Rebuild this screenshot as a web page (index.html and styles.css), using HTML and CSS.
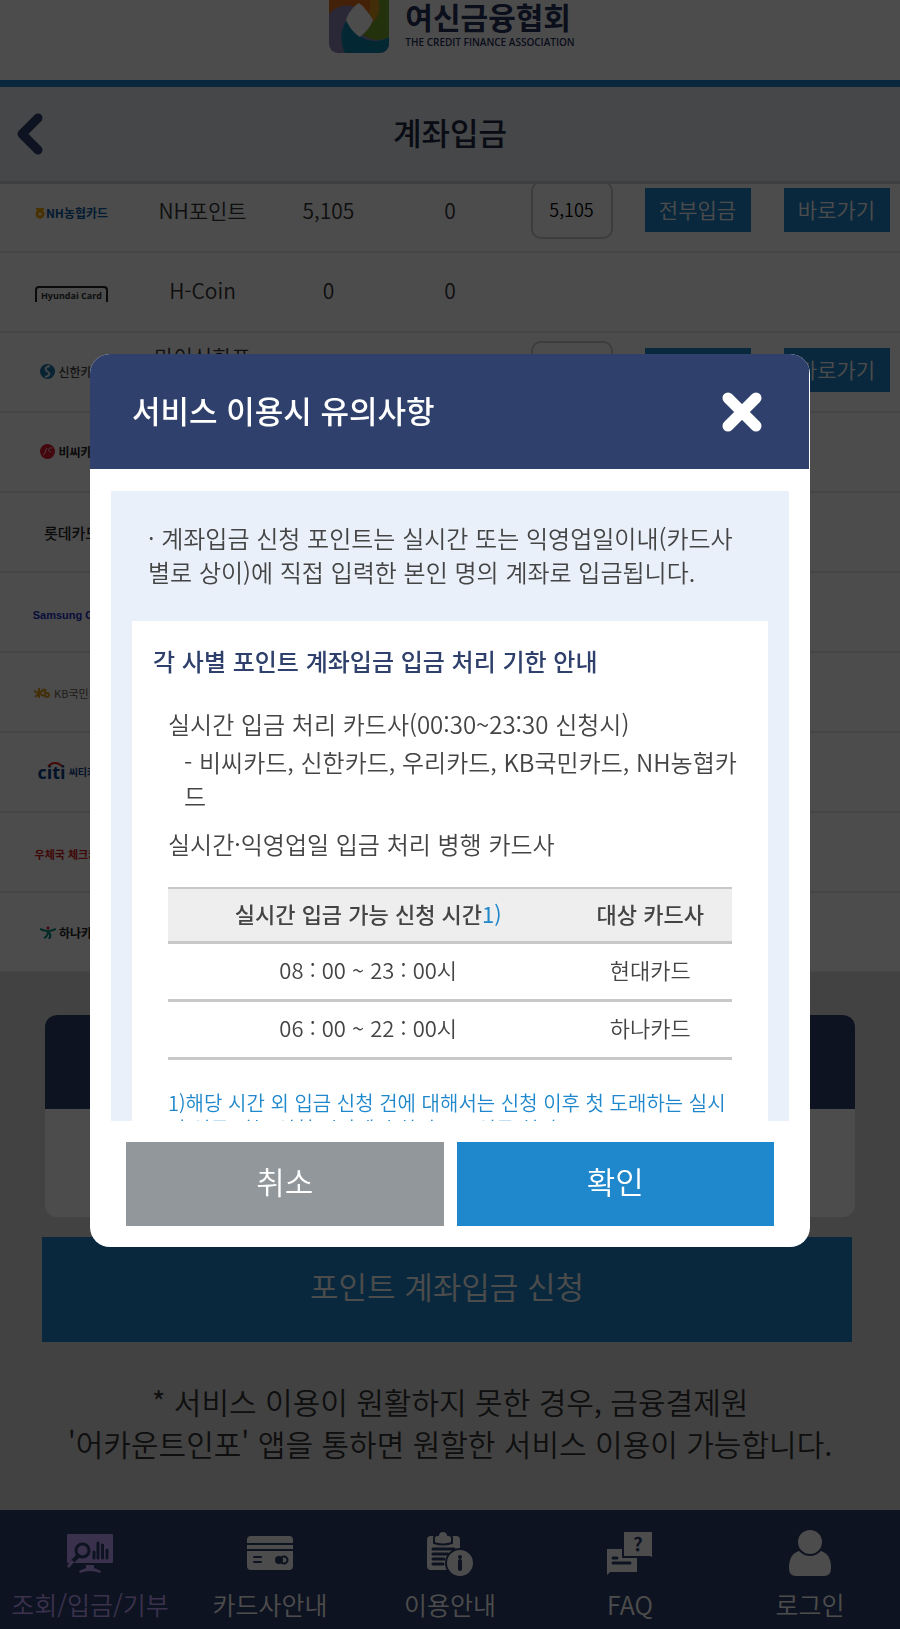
FILE: index.html
```html
<!DOCTYPE html>
<html lang="ko">
  <head>
    <meta charset="UTF-8" />
    <meta name="viewport" content="width=device-width, initial-scale=1.0" />
    <title>계좌입금</title>
    <link rel="stylesheet" href="styles.css">
  </head>

  <body>
    <header class="brand">
      <svg class="brand-mark" width="60" height="61" viewBox="0 0 60 61">
        <rect width="60" height="61" rx="9" fill="#8d86b8" />
        <path d="M0 22V9a9 9 0 0 1 9-9h34c8 8 8 18 1 33L30 17C20 11 8 13 0 22z" fill="#e0701c" />
        <path d="M36 0h15a9 9 0 0 1 9 9v36c-10 5-20 3-27-3l11-13c7-10 3-20-8-29z" fill="#77a52a" />
        <path d="M36 0h8c9 10 8 20 1 30l-6-6c4-9 3-17-3-24z" fill="#d99a1b" />
        <path d="M16 61C10 48 12 36 18 28l12 15c8 7 20 8 30 2v7a9 9 0 0 1-9 9z" fill="#0b87ae" />
        <path d="M30 11c5 4 10 10 14 17-2 6-7 12-13 17-6-4-11-10-14-17 2-7 7-13 13-17z" fill="#fff" />
      </svg>
      <div class="brand-text">
        <strong>여신금융협회</strong>
        <span>THE CREDIT FINANCE ASSOCIATION</span>
      </div>
    </header>

    <div class="title-bar">
      <button type="button" class="back" aria-label="뒤로">
        <svg width="28" height="42" viewBox="0 0 28 42"><path d="M22 5L6 21l16 16" /></svg>
      </button>
      <h1>계좌입금</h1>
    </div>

    <main>
      <table class="points">
        <colgroup>
          <col class="c-logo" /><col class="c-name" /><col class="c-own" /><col class="c-min" />
          <col class="c-input" /><col class="c-all" /><col class="c-go" />
        </colgroup>
        <tbody>
          <tr>
            <td><span class="logo nh"><svg width="10" height="12" viewBox="0 0 10 12"><path d="M1 1h8v2H1z" fill="#f5a800" /><circle cx="5" cy="7" r="3" fill="none" stroke="#f5a800" stroke-width="3" /></svg>NH농협카드</span></td>
            <td>NH포인트</td>
            <td>5,105</td>
            <td>0</td>
            <td><input type="text" value="5,105" aria-label="NH포인트 입금 포인트" /></td>
            <td><button type="button" class="small-btn">전부입금</button></td>
            <td><button type="button" class="small-btn">바로가기</button></td>
          </tr>
          <tr>
            <td><span class="logo hyundai">Hyundai Card</span></td>
            <td>H-Coin</td>
            <td>0</td>
            <td>0</td>
            <td></td>
            <td></td>
            <td></td>
          </tr>
          <tr>
            <td><span class="logo shinhan"><svg width="15" height="15" viewBox="0 0 15 15"><circle cx="7.5" cy="7.5" r="7.5" fill="#1b75a8" /><path d="M10 2C4 3 5 6 8 8s1 4-3 5" fill="none" stroke="#dfeef5" stroke-width="2" /></svg>신한카드</span></td>
            <td>마이신한포<br />인트</td>
            <td>0</td>
            <td>0</td>
            <td><input type="text" value="0" aria-label="마이신한포인트 입금 포인트" /></td>
            <td><button type="button" class="small-btn">전부입금</button></td>
            <td><button type="button" class="small-btn">바로가기</button></td>
          </tr>
          <tr>
            <td><span class="logo bc"><svg width="15" height="15" viewBox="0 0 15 15"><circle cx="7.5" cy="7.5" r="7.5" fill="#e0182d" /><path d="M3 11c3-1 2-5 4-7M12 4c-4-1-5 4-1 4" fill="none" stroke="#f7d5d8" /></svg>비씨카드</span></td>
            <td colspan="6"></td>
          </tr>
          <tr>
            <td><span class="logo lotte">롯데카드</span></td>
            <td colspan="6"></td>
          </tr>
          <tr>
            <td><span class="logo samsung">Samsung Card</span></td>
            <td colspan="6"></td>
          </tr>
          <tr>
            <td><span class="logo kb"><svg width="17" height="12" viewBox="0 0 17 12"><path d="M5 1v10M0 4l10 5M10 2L1 10M10 6l2-4M11 8a2 2 0 1 0 4 0 2 2 0 0 0-4 0z" fill="none" stroke="#e0a020" stroke-width="2" /></svg>KB국민카드</span></td>
            <td colspan="6"></td>
          </tr>
          <tr>
            <td><span class="logo citi"><span class="citi-word">citi<svg width="16" height="5" viewBox="0 0 16 5"><path d="M1 4Q8-2 15 4" fill="none" stroke="#d9261c" stroke-width="2" /></svg></span>씨티카드</span></td>
            <td colspan="6"></td>
          </tr>
          <tr>
            <td><span class="logo post">우체국 체크카드</span></td>
            <td colspan="6"></td>
          </tr>
          <tr>
            <td><span class="logo hana"><svg width="16" height="13" viewBox="0 0 16 13"><circle cx="8" cy="2" r="1.5" fill="#e0182d" /><path d="M0 3c6 3 10 3 16 0M8 5c0 4-1 6-4 7M8 6c3 2 3 4 1 7" fill="none" stroke="#008c80" stroke-width="2" /></svg>하나카드</span></td>
            <td colspan="6"></td>
          </tr>
        </tbody>
      </table>

      <section class="total-card">
        <div class="total-head"></div>
        <div class="total-body"></div>
      </section>

      <button type="button" class="apply">포인트 계좌입금 신청</button>
      <p class="notice">* 서비스 이용이 원활하지 못한 경우, 금융결제원<br />'어카운트인포' 앱을 통하면 원할한 서비스 이용이 가능합니다.</p>
    </main>

    <nav class="tabs">
      <a href="#" class="active">
        <svg width="48" height="48" viewBox="0 0 48 48">
          <rect x="1" y="4" width="46" height="29" rx="1" fill="currentColor" />
          <path d="M20 35h8v3h-8zM13 41q11-7 22 0l-1 2q-10-4-20 0z" fill="currentColor" />
          <g class="cut"><path d="M12 26L7 31" stroke-width="4" /><circle cx="16.5" cy="20.5" r="6.5" /><path d="M28 22v6M32 13v15M36.500 15v13M41 20v8" /></g>
          <path d="M7 31l-5 6" stroke="currentColor" stroke-width="3" />
        </svg>
        조회/입금/기부
      </a>
      <a href="#">
        <svg width="48" height="48" viewBox="0 0 48 48">
          <rect x="1" y="6" width="46" height="34" rx="4" fill="currentColor" />
          <g class="cut thin"><path d="M1 14h46M1 20h46M8 27h7M8 32h7" /><circle cx="38" cy="30" r="3.500" /></g>
          <circle class="hole" cx="33" cy="30" r="4" />
        </svg>
        카드사안내
      </a>
      <a href="#">
        <svg width="48" height="48" viewBox="0 0 48 48">
          <rect x="1" y="6" width="33" height="34" rx="4" fill="currentColor" />
          <path class="clip" d="M8 13V8q0-3 4-3 1-4 5-4t5 4q4 0 4 3v5q-9 3-18 0z" />
          <g class="cut"><path d="M7 19h21M7 24h15M7 29h11M7 34h10" /></g>
          <circle class="info" cx="34" cy="33" r="14" />
          <circle class="hole" cx="34" cy="27" r="2" />
          <g class="cut"><path d="M34 31v8" stroke-width="4" /></g>
        </svg>
        이용안내
      </a>
      <a href="#">
        <svg width="48" height="48" viewBox="0 0 48 48">
          <path d="M1 19h30v23H4l-3 3z" fill="currentColor" />
          <g class="cut"><path d="M7 28h4M7 33h17" /></g>
          <path class="bubble" d="M17 1h30v28l-3-2H17z" />
          <text class="mark" x="32" y="21" text-anchor="middle">?</text>
        </svg>
        FAQ
      </a>
      <a href="#">
        <svg width="48" height="48" viewBox="0 0 48 48">
          <path d="M13 21h22q10 3 10 17 0 8-7 8H10q-7 0-7-8 0-14 10-17z" fill="currentColor" />
          <circle class="head" cx="24" cy="12" r="13" />
        </svg>
        로그인
      </a>
    </nav>

    <div class="overlay">
      <div class="modal" role="dialog" aria-modal="true" aria-labelledby="modal-title">
        <div class="modal-head">
          <h2 id="modal-title">서비스 이용시 유의사항</h2>
          <button type="button" class="close" aria-label="닫기">
            <svg width="42" height="42" viewBox="0 0 42 42"><path d="M7 7l28 28M35 7L7 35" /></svg>
          </button>
        </div>

        <div class="modal-scroll">
          <p class="lead">· 계좌입금 신청 포인트는 실시간 또는 익영업일이내(카드사<br />별로 상이)에 직접 입력한 본인 명의 계좌로 입금됩니다.</p>

          <div class="guide">
            <h3>각 사별 포인트 계좌입금 입금 처리 기한 안내</h3>
            <div class="guide-body">
              <p>실시간 입금 처리 카드사(00:30~23:30 신청시)</p>
              <p class="cards">- 비씨카드, 신한카드, 우리카드, KB국민카드, NH농협카드</p>
              <p>실시간·익영업일 입금 처리 병행 카드사</p>

              <table class="hours">
                <thead>
                  <tr>
                    <th>실시간 입금 가능 신청 시간<span class="ref">1)</span></th>
                    <th>대상 카드사</th>
                  </tr>
                </thead>
                <tbody>
                  <tr>
                    <td>08 : 00 ~ 23 : 00시</td>
                    <td>현대카드</td>
                  </tr>
                  <tr>
                    <td>06 : 00 ~ 22 : 00시</td>
                    <td>하나카드</td>
                  </tr>
                </tbody>
              </table>

              <p class="footnote">1)해당 시간 외 입금 신청 건에 대해서는 신청 이후 첫 도래하는 실시간 입금 가능 신청 시간에 순차적으로 입금 처리</p>
            </div>
          </div>
        </div>

        <div class="modal-actions">
          <button type="button" class="cancel">취소</button>
          <button type="button" class="confirm">확인</button>
        </div>
      </div>
    </div>
  </body>
</html>
```
FILE: styles.css
```css
* {
  box-sizing: border-box;
}

body {
  margin: 0;
  min-height: 100vh;
  display: flex;
  flex-direction: column;
  background: #dcdcdc;
  color: #333;
  font-family: "Noto Sans CJK KR", sans-serif;
  font-weight: 350;
}

h1,
h2,
h3,
p {
  margin: 0;
}

button,
input {
  font-family: inherit;
  font-weight: inherit;
}

button {
  border: 0;
  padding: 0;
}

/* top */
.brand {
  height: 80px;
  padding-left: 4px;
  background: #fff;
  display: flex;
  justify-content: center;
  align-items: flex-start;
  gap: 16px;
  overflow: hidden;
}

.brand-mark {
  margin-top: -8px;
}

.brand-text {
  display: flex;
  flex-direction: column;
  color: #26305c;
  line-height: 32px;
}

.brand-text strong {
  font-size: 30px;
  font-weight: 700;
}

.brand-text span {
  font-family: "Open Sans", sans-serif;
  font-size: 10px;
  font-weight: 600;
  line-height: 20px;
}

.title-bar {
  position: relative;
  z-index: 1;
  height: 104px;
  border-top: 7px solid #1f87cb;
  border-bottom: 3px solid #cfd4d8;
  background: #e6edf2;
  display: grid;
  grid-template-columns: 60px 1fr 60px;
  align-items: center;
}

.title-bar h1 {
  padding-bottom: 4px;
  text-align: center;
  font-size: 31px;
  font-weight: 500;
  line-height: 40px;
  color: #1f2a44;
}

.back {
  background: none;
  display: flex;
  justify-content: center;
}

.back path,
.close path {
  fill: none;
  stroke: #2e406b;
  stroke-width: 9;
  stroke-linecap: round;
  stroke-linejoin: round;
}

/* point list, scrolled slightly under the title bar */
.points {
  width: 100%;
  margin-top: -12px;
  table-layout: fixed;
  border-collapse: collapse;
  background: #fff;
  font-size: 21px;
  line-height: 28px;
  text-align: center;
}

.c-logo { width: 15%; }
.c-name { width: 15%; }
.c-own { width: 13%; }
.c-min { width: 14%; }
.c-input { width: 13%; }
.c-all { width: 15%; }
.c-go { width: 15%; }

.points td {
  height: 80px;
  padding: 0 0 4px;
  border-bottom: 2px solid #e6e6e6;
}

.points td:first-child,
.points td:last-child {
  padding-left: 8px;
}

.points input {
  width: 82px;
  height: 58px;
  padding: 0 0 2px;
  border: 2px solid #ccc;
  border-radius: 10px;
  background: #fff;
  text-align: center;
  font-size: 18px;
  color: #000;
}

.small-btn {
  width: 106px;
  height: 44px;
  padding-bottom: 2px;
  background: #1f87cb;
  color: #fff;
  font-size: 21px;
}

.logo {
  display: inline-flex;
  align-items: center;
  gap: 3px;
  font-size: 12px;
  line-height: 16px;
  font-weight: 700;
  white-space: nowrap;
}

.nh { color: #0b5aa6; gap: 1px; }

.hyundai {
  padding: 2px 4px 0;
  border: 2px solid #222;
  border-bottom: 0;
  border-radius: 4px 4px 0 0;
  font-family: "Open Sans", sans-serif;
  font-size: 9px;
  line-height: 12px;
}

.shinhan { font-weight: 500; color: #444; font-size: 12px; }
.bc { color: #222; }
.lotte { color: #222; font-size: 15px; font-weight: 500; }
.samsung { color: #1c2ec0; font-family: "Liberation Sans", sans-serif; font-size: 11px; }
.kb { color: #6b6259; font-weight: 400; font-size: 11px; }
.citi { color: #0b3f86; font-size: 10px; }
.post { color: #d3201c; font-size: 11px; }
.hana { color: #222; }

.citi-word {
  position: relative;
  font-family: "Open Sans", sans-serif;
  font-size: 18px;
}

.citi-word svg {
  position: absolute;
  left: 9px;
  top: -2px;
}

.total-card {
  margin: 42px 45px 0;
  border-radius: 12px;
  overflow: hidden;
  background: #fff;
}

.total-head {
  height: 94px;
  background: #2e406b;
}

.total-body {
  height: 108px;
}

.apply {
  display: block;
  width: calc(100% - 90px);
  height: 105px;
  margin: 20px 49px 0 42px;
  padding-bottom: 8px;
  background: #1f87cb;
  color: #fff;
  font-size: 31px;
}

.notice {
  margin-top: 38px;
  text-align: center;
  font-size: 30px;
  line-height: 42px;
}

/* bottom tabs */
.tabs {
  height: 119px;
  margin-top: auto;
  padding-top: 20px;
  display: grid;
  grid-template-columns: repeat(5, 1fr);
  background: #2e406b;
}

.tabs a {
  display: flex;
  flex-direction: column;
  align-items: center;
  gap: 8px;
  color: #fff;
  text-decoration: none;
  font-size: 25px;
  line-height: 36px;
}

.tabs .active {
  color: #c3a5ff;
}

.tabs .cut {
  fill: none;
  stroke: #2e406b;
  stroke-width: 3;
  stroke-linecap: round;
}

.tabs .thin {
  stroke-width: 2;
}

.tabs .hole,
.tabs .mark {
  fill: #2e406b;
}

.tabs .mark {
  font-size: 19px;
  font-weight: 700;
}

.tabs .clip,
.tabs .info,
.tabs .bubble,
.tabs .head {
  fill: currentColor;
  stroke: #2e406b;
  stroke-width: 2;
}

/* dialog */
.overlay {
  position: fixed;
  inset: 0;
  z-index: 10;
  display: flex;
  justify-content: center;
  align-items: flex-start;
  padding-top: 354px;
  background: rgba(0, 0, 0, 0.7);
}

.modal {
  width: 80%;
  border-radius: 20px;
  overflow: hidden;
  background: #fff;
  color: #444;
}

.modal-head {
  height: 115px;
  margin-right: 1px;
  padding: 0 46px 0 42px;
  display: flex;
  align-items: center;
  justify-content: space-between;
  background: #2e406b;
  color: #fff;
}

.modal-head h2 {
  padding-bottom: 4px;
  font-size: 31px;
  font-weight: 500;
  line-height: 40px;
}

.close {
  height: 42px;
  background: none;
}

.close path {
  stroke: #fff;
  stroke-width: 11;
}

.modal-scroll {
  height: 630px;
  margin: 22px 21px 21px;
  padding: 30px 21px;
  overflow-y: auto;
  scrollbar-width: none;
  background: #e9f0fa;
}

.lead {
  padding-left: 16px;
  font-size: 24px;
  line-height: 34px;
  white-space: nowrap;
}

.guide {
  margin-top: 32px;
  padding: 22px 21px;
  background: #fff;
}

.guide h3 {
  font-size: 24px;
  line-height: 36px;
  font-weight: 500;
  color: #2e406b;
}

.guide-body {
  padding: 28px 15px 0;
  font-size: 24px;
  line-height: 34px;
  word-break: break-all;
}

.cards {
  margin: 4px -10px 14px 0;
  padding-left: 16px;
}

.hours {
  width: 100%;
  margin-top: 26px;
  table-layout: fixed;
  border-collapse: collapse;
  border-top: 2px solid #c8c8c8;
  font-size: 22px;
  line-height: 32px;
  text-align: center;
}

.hours th {
  height: 54px;
  padding: 0 0 4px;
  background: #eee;
  font-weight: 500;
  border-bottom: 3px solid #c8c8c8;
}

.hours th:first-child {
  width: 71%;
}

.hours td {
  height: 58px;
  padding: 0 0 4px;
  border-bottom: 3px solid #c8c8c8;
}

.ref {
  color: #1f87cb;
  font-weight: 400;
}

.footnote {
  margin-top: 30px;
  font-size: 20px;
  line-height: 26px;
  color: #1f87cb;
}

.modal-actions {
  display: flex;
  gap: 13px;
  padding: 0 36px 21px;
}

.modal-actions button {
  flex: 1;
  height: 84px;
  padding-bottom: 8px;
  color: #fff;
  font-size: 31px;
}

.cancel {
  background: #92979b;
}

.confirm {
  background: #1f87cb;
}
```
